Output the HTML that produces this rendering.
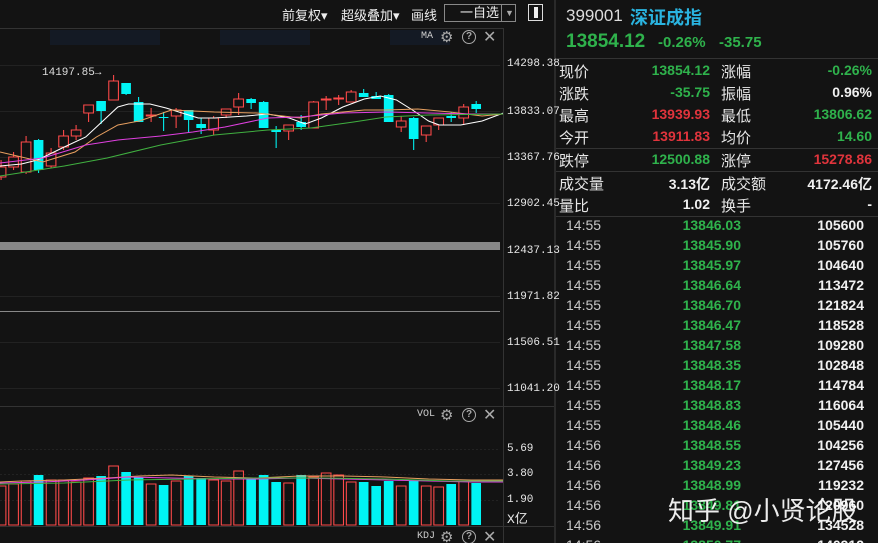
<!DOCTYPE html>
<html><head><meta charset="utf-8"><style>
*{margin:0;padding:0;box-sizing:border-box}
html,body{width:878px;height:543px;overflow:hidden}
body{background:#131313;position:relative;font-family:"Liberation Sans","Noto Sans CJK SC",sans-serif;color:#ddd}
.a{position:absolute;white-space:nowrap}
.ax{font-family:"Liberation Mono","Noto Sans CJK SC",monospace;font-size:11px;color:#e8e8e8;left:507px}
.rp .l{position:absolute;left:559px;font-size:15px;color:#e6e6e6}
.rp .v{position:absolute;right:168px;font-size:14px;font-weight:bold;text-align:right}
.rp .l2{position:absolute;left:721px;font-size:15px;color:#e6e6e6}
.rp .v2{position:absolute;right:6px;font-size:14px;font-weight:bold;text-align:right}
.g{color:#2fb24c}.r{color:#e0343c}.w{color:#f0f0f0}
.tr{position:absolute;left:556px;width:322px;height:20px;font-size:14px;font-weight:bold}
.tr span{position:absolute;top:0}
.tr .t{left:10px;color:#c8c8c8;font-weight:normal}
.tr .p{right:137px;color:#2fb24c}
.tr .q{right:14px;color:#f0f0f0}
</style></head><body>
<div class="a" style="left:282px;top:5px;font-size:13px;color:#eee">前复权▾</div>
<div class="a" style="left:341px;top:5px;font-size:13px;color:#eee">超级叠加▾</div>
<div class="a" style="left:411px;top:5px;font-size:13px;color:#eee">画线</div>
<div class="a" style="left:444px;top:4px;width:72px;height:18px;border:1px solid #888;font-size:13px;color:#eee;padding-left:15px;line-height:16px">一自选<span style="position:absolute;left:56px;top:0;width:1px;height:16px;background:#888"></span><span style="position:absolute;left:60px;top:0;font-size:9px;color:#aaa">▼</span></div>
<div class="a" style="left:528px;top:4px;width:15px;height:17px;border:1px solid #ddd"><div style="position:absolute;left:5px;top:2px;width:4px;height:11px;background:#eee"></div></div>
<div class="a" style="left:0;top:28px;width:503px;height:1px;background:#333"></div>
<div class="a" style="left:503px;top:28px;width:1px;height:515px;background:#333"></div>
<div class="a" style="left:554px;top:0;width:2px;height:543px;background:#2a2a2a"></div>
<div class="a" style="left:0;top:406px;width:554px;height:1px;background:#333"></div>
<div class="a" style="left:0;top:526px;width:554px;height:1px;background:#333"></div>
<div class="a" style="left:50px;top:30px;width:110px;height:15px;background:#141a24"></div>
<div class="a" style="left:220px;top:30px;width:90px;height:15px;background:#141a24"></div>
<div class="a" style="left:390px;top:30px;width:60px;height:15px;background:#141a24"></div>
<div class="a" style="left:421px;top:31px;font-size:10px;font-family:'Liberation Mono',monospace;color:#ccc">MA</div>
<div class="a" style="left:440px;top:28px;font-size:15px;color:#aaa">⚙</div>
<div class="a" style="left:462px;top:30px;width:14px;height:14px;border:1.5px solid #aaa;border-radius:50%;font-size:10px;color:#aaa;text-align:center;line-height:11px;font-weight:bold">?</div>
<div class="a" style="left:483px;top:27px;font-size:16px;color:#aaa">✕</div>
<div class="a" style="left:417px;top:409px;font-size:10px;font-family:'Liberation Mono',monospace;color:#ccc">VOL</div>
<div class="a" style="left:440px;top:406px;font-size:15px;color:#aaa">⚙</div>
<div class="a" style="left:462px;top:408px;width:14px;height:14px;border:1.5px solid #aaa;border-radius:50%;font-size:10px;color:#aaa;text-align:center;line-height:11px;font-weight:bold">?</div>
<div class="a" style="left:483px;top:405px;font-size:16px;color:#aaa">✕</div>
<div class="a" style="left:417px;top:531px;font-size:10px;font-family:'Liberation Mono',monospace;color:#ccc">KDJ</div>
<div class="a" style="left:440px;top:528px;font-size:15px;color:#aaa">⚙</div>
<div class="a" style="left:462px;top:530px;width:14px;height:14px;border:1.5px solid #aaa;border-radius:50%;font-size:10px;color:#aaa;text-align:center;line-height:11px;font-weight:bold">?</div>
<div class="a" style="left:483px;top:527px;font-size:16px;color:#aaa">✕</div>
<div class="a ax" style="top:58px">14298.38</div>
<div class="a ax" style="top:106px">13833.07</div>
<div class="a ax" style="top:152px">13367.76</div>
<div class="a ax" style="top:198px">12902.45</div>
<div class="a ax" style="top:245px">12437.13</div>
<div class="a ax" style="top:291px">11971.82</div>
<div class="a ax" style="top:337px">11506.51</div>
<div class="a ax" style="top:383px">11041.20</div>
<div class="a ax" style="top:443px">5.69</div>
<div class="a ax" style="top:468px">3.80</div>
<div class="a ax" style="top:494px">1.90</div>
<div class="a ax" style="top:508px;font-size:13px">X亿</div>
<div class="a" style="left:42px;top:67px;font-size:11px;font-family:'Liberation Mono',monospace;color:#ddd">14197.85→</div>
<svg class="a" style="left:0;top:0" width="503" height="543">
<g stroke="#222" stroke-width="1">
<line x1="0" y1="65.5" x2="500" y2="65.5"/><line x1="0" y1="111.5" x2="500" y2="111.5"/><line x1="0" y1="157.5" x2="500" y2="157.5"/><line x1="0" y1="203.5" x2="500" y2="203.5"/><line x1="0" y1="296.5" x2="500" y2="296.5"/><line x1="0" y1="342.5" x2="500" y2="342.5"/><line x1="0" y1="388.5" x2="500" y2="388.5"/>
<line x1="0" y1="449.5" x2="500" y2="449.5" stroke-dasharray="2 2"/><line x1="0" y1="474.5" x2="500" y2="474.5" stroke-dasharray="2 2"/><line x1="0" y1="500.5" x2="500" y2="500.5" stroke-dasharray="2 2"/>
</g>
<rect x="0" y="242" width="500" height="8" fill="#888"/>
<line x1="0" y1="311.5" x2="500" y2="311.5" stroke="#888"/>
<g transform="scale(1.0714,1)" id="c"></g>
</svg>
<div class="rp">
<div class="a" style="left:566px;top:6px;font-size:17px;color:#ddd">399001</div>
<div class="a" style="left:630px;top:4px;font-size:18px;font-weight:bold;color:#2ab4e0">深证成指</div>
<div class="a" style="left:566px;top:31px;font-size:19px;font-weight:bold;color:#2fb24c">13854.12</div>
<div class="a" style="left:658px;top:34px;font-size:15px;font-weight:bold;color:#2fb24c">-0.26%</div>
<div class="a" style="left:719px;top:34px;font-size:15px;font-weight:bold;color:#2fb24c">-35.75</div>
<div class="a" style="left:556px;top:58px;width:322px;height:1px;background:#333"></div>
<div class="a" style="left:556px;top:148px;width:322px;height:1px;background:#333"></div>
<div class="a" style="left:556px;top:171px;width:322px;height:1px;background:#333"></div>
<div class="a" style="left:556px;top:216px;width:322px;height:1px;background:#333"></div>
<div class="l" style="top:61px">现价</div><div class="v g" style="top:62px">13854.12</div><div class="l2" style="top:61px">涨幅</div><div class="v2 g" style="top:62px">-0.26%</div>
<div class="l" style="top:83px">涨跌</div><div class="v g" style="top:84px">-35.75</div><div class="l2" style="top:83px">振幅</div><div class="v2 w" style="top:84px">0.96%</div>
<div class="l" style="top:105px">最高</div><div class="v r" style="top:106px">13939.93</div><div class="l2" style="top:105px">最低</div><div class="v2 g" style="top:106px">13806.62</div>
<div class="l" style="top:127px">今开</div><div class="v r" style="top:128px">13911.83</div><div class="l2" style="top:127px">均价</div><div class="v2 g" style="top:128px">14.60</div>
<div class="l" style="top:150px">跌停</div><div class="v g" style="top:151px">12500.88</div><div class="l2" style="top:150px">涨停</div><div class="v2 r" style="top:151px">15278.86</div>
<div class="l" style="top:173px">成交量</div><div class="v w" style="top:174px">3.13亿</div><div class="l2" style="top:173px">成交额</div><div class="v2 w" style="top:174px">4172.46亿</div>
<div class="l" style="top:195px">量比</div><div class="v w" style="top:196px">1.02</div><div class="l2" style="top:195px">换手</div><div class="v2 w" style="top:196px">-</div>
</div>
<div id="t"></div>
<div class="a" style="left:668px;top:491px;font-size:26px;color:#fff;opacity:.92">知乎 @小贤论股</div>
<script>
var C=[[167,177,160,180,1],[157,167,152,170,1],[142,172,136,174,1],[140,170,139,173,0],[153,166,148,168,1],[136,147,130,150,1],[130,136,125,140,1],[105,113,105,122,1],[101,111,101,124,0],[81,100,75,100,1],[83,94,83,95,0],[102,122,97,122,0],[115,116,108,122,1],[117,118,112,131,0],[110,116,108,128,1],[110,120,110,132,0],[124,128,118,134,0],[118,130,116,135,1],[109,115,109,118,1],[99,107,93,115,1],[99,103,98,109,0],[102,128,101,128,0],[130,132,126,148,0],[125,131,125,140,1],[122,127,115,130,0],[102,128,101,128,1],[99,100,96,110,1],[98,99,95,105,1],[92,102,90,102,1],[93,97,89,97,0],[96,99,92,99,0],[95,122,94,122,0],[121,127,116,132,1],[118,139,117,150,0],[126,135,126,142,1],[118,125,118,130,1],[116,118,112,122,0],[107,118,104,125,1],[104,109,101,113,0]];
var V=[486,484,481,475,480,480,482,478,476,466,472,477,484,485,481,476,478,480,481,471,478,475,482,483,475,477,473,475,482,482,486,481,486,480,486,487,484,481,483];
var s='';
C.forEach(function(c,i){var x=i*11.67+1,col=c[4]?'#ff4a4a':'#00f5f5';
s+='<line x1="'+x+'" y1="'+c[2]+'" x2="'+x+'" y2="'+c[3]+'" stroke="'+col+'" stroke-width="1"/>';
var h=Math.max(1,c[1]-c[0]);
if(c[4])s+='<rect x="'+(x-4.5)+'" y="'+c[0]+'" width="9" height="'+h+'" fill="#131313" stroke="'+col+'"/>';
else s+='<rect x="'+(x-4.5)+'" y="'+c[0]+'" width="9" height="'+h+'" fill="'+col+'"/>';
var t=V[i];
if(c[4])s+='<rect x="'+(x-4.5)+'" y="'+t+'" width="9" height="'+(525-t)+'" fill="none" stroke="#ff4a4a"/>';
else s+='<rect x="'+(x-4.5)+'" y="'+t+'" width="9" height="'+(525-t)+'" fill="#00f5f5"/>';});
function pl(p,c){return '<polyline fill="none" stroke="'+c+'" stroke-width="1" points="'+p+'"/>';}
s+=pl('0,166 20,164 35,160 60,147 80,137 95,122 110,107 120,104 140,104 155,108 170,113 185,118 200,118 230,116 250,114 270,118 285,124 300,118 320,107 340,99 355,96 370,100 385,110 400,121 410,125 430,125 450,121 470,113','#fff');
s+=pl('0,152 40,162 70,152 90,137 110,125 130,121 160,110 200,112 240,113 280,118 300,114 340,110 360,110 390,109 420,112 450,116 470,114','#e8a060');
s+=pl('0,163 40,158 80,145 110,140 150,136 180,132 210,127 250,118 280,117 320,113 360,112 400,113 440,114 470,114','#e040e0');
s+=pl('0,176 60,166 100,158 150,145 200,135 250,130 290,128 330,122 360,117 400,115 470,114','#40b040');
s+=pl('0,482 20,481 60,480 100,478 130,476 160,475 200,477 240,478 280,476 320,476 360,477 400,479 440,480 470,480','#e8a060');
s+=pl('0,483 40,482 80,480 120,477 160,478 200,479 240,479 280,478 320,479 360,480 400,481 440,482 470,482','#e040e0');
s+=pl('0,484 60,483 120,480 180,479 240,478 300,478 360,479 420,481 470,481','#40b040');
document.getElementById('c').innerHTML=s;
var R=[['14:55','13846.03','105600'],['14:55','13845.90','105760'],['14:55','13845.97','104640'],['14:55','13846.64','113472'],['14:55','13846.70','121824'],['14:55','13846.47','118528'],['14:55','13847.58','109280'],['14:55','13848.35','102848'],['14:55','13848.17','114784'],['14:55','13848.83','116064'],['14:55','13848.46','105440'],['14:56','13848.55','104256'],['14:56','13849.23','127456'],['14:56','13848.99','119232'],['14:56','13849.81','120960'],['14:56','13849.91','134528'],['14:56','13850.77','140912']];
var h='';R.forEach(function(r,i){h+='<div class="tr" style="top:'+(217+i*20)+'px"><span class="t">'+r[0]+'</span><span class="p">'+r[1]+'</span><span class="q">'+r[2]+'</span></div>';});
document.getElementById('t').innerHTML=h;
</script>
</body></html>
